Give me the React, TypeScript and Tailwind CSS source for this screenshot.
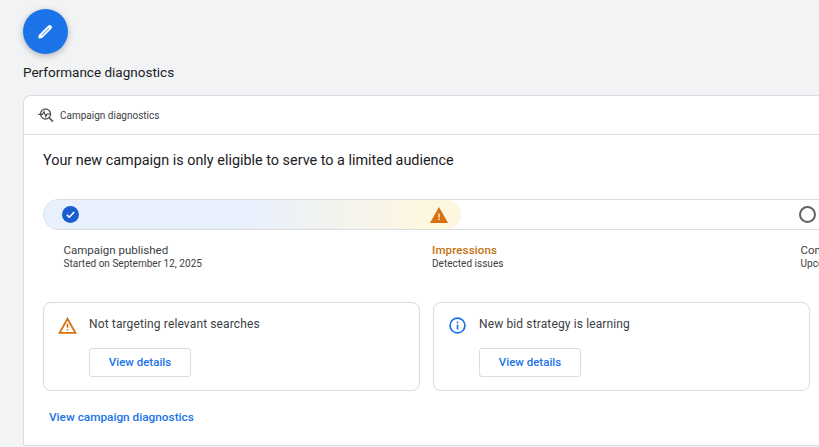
function EditIcon() {
    return (
        <svg width="15" height="15" viewBox="0 0 15 15" fill="none">
            <path d="M3 12 11.6 3.4" stroke="#fff" strokeWidth="4.4" strokeLinecap="round" />
            <path d="M.4 14.6 1 10.4 4.6 14Z" fill="#fff" />
            <path d="M4 11.2 11 4.2" stroke="#1a73e8" strokeWidth="0.9" />
        </svg>
    );
}

function DiagnosticsIcon() {
    return (
        <svg width="16" height="16" viewBox="0 0 16 16" fill="none" stroke="#5f6368" className="shrink-0">
            <circle cx="7.5" cy="7" r="5" strokeWidth="1.4" />
            <path d="M11 10.6 15 14.6" strokeWidth="1.7" />
            <path d="M.4 7.4H4.6L6 4.6 7.8 9.6 9 7H13" strokeWidth="1.1" stroke="#3c4043" />
        </svg>
    );
}

function CheckIcon() {
    return (
        <svg width="17" height="17" viewBox="0 0 17 17">
            <circle cx="8.5" cy="8.5" r="8.5" fill="#1a5ed0" />
            <path d="M4.8 8.8 7.4 11.2 12.2 6" fill="none" stroke="#fff" strokeWidth="1.6" />
        </svg>
    );
}

function SolidWarning() {
    return (
        <svg width="18" height="16" viewBox="0 0 18 16">
            <path d="M9 0 18 16H0Z" fill="#d9700c" />
            <path d="M8.3 6.4H9.7V10.4H8.3ZM8.3 11.6H9.7V13H8.3Z" fill="#fdf3e0" />
        </svg>
    );
}

function OutlineWarning() {
    return (
        <svg width="19" height="17" viewBox="0 0 19 17" className="shrink-0">
            <path d="M9.5 1.8 17.4 15.8H1.6Z" fill="none" stroke="#d9700c" strokeWidth="1.8" />
            <path d="M8.7 6.8H10.3V10.8H8.7ZM8.7 12H10.3V13.6H8.7Z" fill="#d9700c" />
        </svg>
    );
}

function InfoIcon() {
    return (
        <svg width="17" height="17" viewBox="0 0 17 17" className="shrink-0">
            <circle cx="8.5" cy="8.5" r="7.4" fill="none" stroke="#1a73e8" strokeWidth="1.7" />
            <path d="M7.7 7.6H9.3V12.6H7.7ZM7.7 4.6H9.3V6.2H7.7Z" fill="#1a73e8" />
        </svg>
    );
}

function Step({ title, sub, titleClass }: { title: string; sub: string; titleClass: string }) {
    return (
        <div className="w-[368.5px] shrink-0 whitespace-nowrap">
            <div className={`text-[11.5px] leading-[14px] ${titleClass}`}>{title}</div>
            <div className="text-[10px] leading-[13px] tracking-[0.02px] text-[#3c4043]">{sub}</div>
        </div>
    );
}

function IssueCard({ icon, title }: { icon: React.ReactNode; title: string }) {
    return (
        <div className="flex h-[89px] gap-[13px] rounded-lg border border-[#dadce0] pl-[14px] pt-[13px]">
            <div className="flex w-[18px] justify-center pt-px">{icon}</div>
            <div>
                <div className="text-[12px] leading-[16px] tracking-[0.13px] text-[#3c4043]">{title}</div>
                <button className="mt-[16px] flex h-[29px] w-[102px] items-center justify-center rounded-[3px] border border-[#dadce0] bg-white text-[11.5px] font-medium text-[#1a73e8]">
                    View details
                </button>
            </div>
        </div>
    );
}

export default function App() {
    return (
        <div className="h-[447px] w-[819px] overflow-hidden bg-[#f1f3f4] font-['Roboto',sans-serif]">
            <div className="pl-[23px] pt-[9px]">
                <button className="flex h-[45px] w-[45px] items-center justify-center rounded-full bg-[#1a73e8] shadow-[0_2px_6px_rgba(60,64,67,0.35)]">
                    <EditIcon />
                </button>
                <h2 className="mt-[10px] text-[13.5px] leading-[16px] text-[#202124]">Performance diagnostics</h2>

                <div className="mt-[15px] w-[840px] rounded-t-lg border border-[#dadce0] bg-white">
                    <div className="flex h-[39px] items-center gap-[6px] border-b border-[#dadce0] pl-[14px]">
                        <DiagnosticsIcon />
                        <span className="text-[10px] text-[#3c4043]">Campaign diagnostics</span>
                    </div>

                    <div className="h-[310px] pl-[19px]">
                        <h3 className="pt-[16px] text-[14.4px] leading-[20px] text-[#202124]">
                            Your new campaign is only eligible to serve to a limited audience
                        </h3>

                        <div className="mt-[28px] flex h-[31px] w-[810px] overflow-hidden rounded-full border border-[#dadce0]">
                            <div className="flex h-full w-[417px] items-center justify-between rounded-r-full bg-[linear-gradient(90deg,#e8f0fe_0%,#e8f0fe_48%,#fef7e0_92%)] pl-[18px] pr-[13px]">
                                <CheckIcon />
                                <SolidWarning />
                            </div>
                            <div className="ml-[338px] flex h-full items-center">
                                <div className="h-[17px] w-[17px] rounded-full border-2 border-[#5f6368]" />
                            </div>
                        </div>

                        <div className="mt-[13px] flex pl-[20.5px]">
                            <Step title="Campaign published" sub="Started on September 12, 2025" titleClass="text-[#3c4043]" />
                            <Step title="Impressions" sub="Detected issues" titleClass="font-medium tracking-[0.15px] text-[#c5710f]" />
                            <Step title="Completion" sub="Upcoming" titleClass="text-[#3c4043]" />
                        </div>

                        <div className="mt-[32px] grid w-[767px] grid-cols-2 gap-[13px]">
                            <IssueCard icon={<OutlineWarning />} title="Not targeting relevant searches" />
                            <IssueCard icon={<InfoIcon />} title="New bid strategy is learning" />
                        </div>

                        <a className="ml-[6px] mt-[18px] block text-[11.8px] font-medium leading-[16px] text-[#1a73e8]">
                            View campaign diagnostics
                        </a>
                    </div>
                </div>
            </div>
        </div>
    );
}
